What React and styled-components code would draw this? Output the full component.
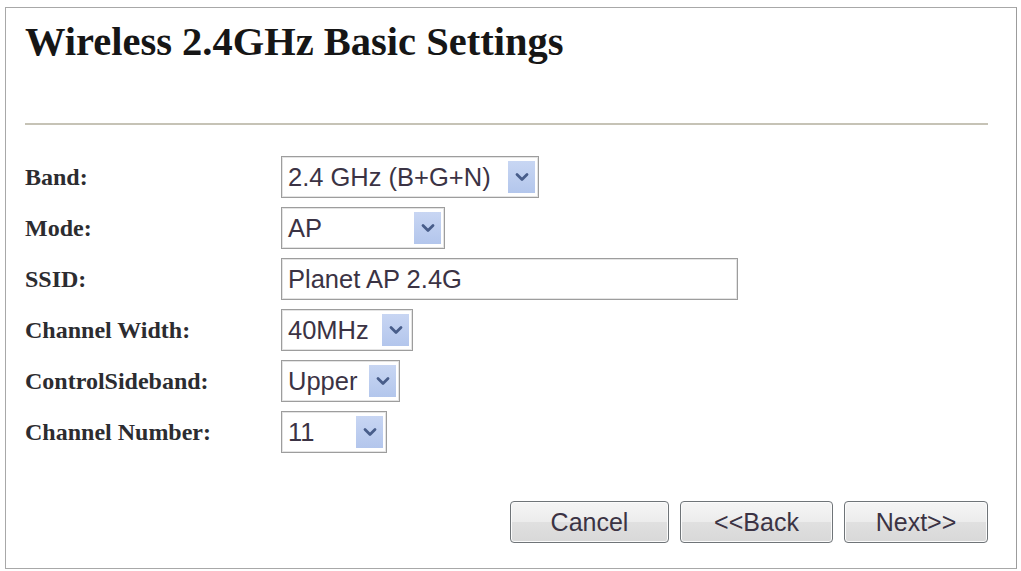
import React from 'react';
import styled, { createGlobalStyle } from 'styled-components';

const GlobalStyle = createGlobalStyle`
  html, body {
    margin: 0;
    padding: 0;
    background: #ffffff;
  }
`;

const fields = [
  { label: 'Band:', value: '2.4 GHz (B+G+N)', width: 258, kind: 'select' },
  { label: 'Mode:', value: 'AP', width: 164, kind: 'select' },
  { label: 'SSID:', value: 'Planet AP 2.4G', width: 457, kind: 'input' },
  { label: 'Channel Width:', value: '40MHz', width: 132, kind: 'select' },
  { label: 'ControlSideband:', value: 'Upper', width: 119, kind: 'select' },
  { label: 'Channel Number:', value: '11', width: 106, kind: 'select' },
];

const buttons = [
  { text: 'Cancel', width: 159 },
  { text: '<<Back', width: 153 },
  { text: 'Next>>', width: 144 },
];

function Chevron() {
  return (
    <svg width="14" height="10" viewBox="0 0 14 10">
      <path d="M2 2.5 L7 7.5 L12 2.5" fill="none" stroke="#485d8a" strokeWidth="2.8" strokeLinecap="round" strokeLinejoin="round" />
    </svg>
  );
}

function Field({ field }) {
  return (
    <Box $width={field.width}>
      <BoxText>{field.value}</BoxText>
      {field.kind === 'select' && (
        <ArrowButton>
          <Chevron />
        </ArrowButton>
      )}
    </Box>
  );
}

export default function App() {
  return (
    <>
      <GlobalStyle />
      <Frame>
        <Title>Wireless 2.4GHz Basic Settings</Title>
        <Divider />
        <Form>
          {fields.map((f) => (
            <Row key={f.label}>
              <Label>{f.label}</Label>
              <Field field={f} />
            </Row>
          ))}
        </Form>
        <ButtonBar>
          {buttons.map((b) => (
            <Button key={b.text} $width={b.width}>{b.text}</Button>
          ))}
        </ButtonBar>
      </Frame>
    </>
  );
}

// Styled Components
const Frame = styled.div`
  margin: 7px 4px 0 5px;
  height: 562px;
  box-sizing: border-box;
  border: 1px solid #a8a8a8;
  border-right-color: #9c9c9c;
  padding: 0 28px 0 19px;
  display: flex;
  flex-direction: column;
`;

const Title = styled.h1`
  margin: 13px 0 0 0;
  font-family: "Liberation Serif", "Times New Roman", serif;
  font-weight: bold;
  font-size: 40.5px;
  line-height: 42px;
  color: #161616;
`;

const Divider = styled.div`
  margin-top: 60px;
  height: 0;
  border-top: 2px solid #c6c3b6;
`;

const Form = styled.div`
  margin-top: 31px;
  display: flex;
  flex-direction: column;
  gap: 9px;
`;

const Row = styled.div`
  display: grid;
  grid-template-columns: 256px auto;
  align-items: center;
  height: 42px;
`;

const Label = styled.div`
  font-family: "Liberation Serif", "Times New Roman", serif;
  font-weight: bold;
  font-size: 24px;
  color: #2c2c30;
`;

const Box = styled.div`
  width: ${(p) => p.$width}px;
  height: 42px;
  box-sizing: border-box;
  border: 1px solid #9d9d9d;
  box-shadow: inset 0 0 0 1px #e4e4e4;
  background: #ffffff;
  display: flex;
  align-items: center;
  padding: 0 3px 0 6px;
`;

const BoxText = styled.span`
  flex: 1;
  font-family: "Liberation Sans", Arial, sans-serif;
  font-size: 25.5px;
  color: #3b3344;
  white-space: nowrap;
`;

const ArrowButton = styled.span`
  width: 27px;
  height: 32px;
  display: flex;
  align-items: center;
  justify-content: center;
  background: linear-gradient(#c8d6f3, #b3c6ec);
`;

const ButtonBar = styled.div`
  margin-top: 48px;
  display: flex;
  justify-content: flex-end;
  gap: 11px;
`;

const Button = styled.button`
  width: ${(p) => p.$width}px;
  height: 42px;
  border: 1px solid #6f7478;
  border-radius: 4px;
  box-shadow: inset 0 0 0 1px #fbfbfb;
  background: linear-gradient(#f5f5f5, #ececec 50%, #e0e0e0 51%, #d8d8d8);
  font-family: "Liberation Sans", Arial, sans-serif;
  font-size: 25px;
  color: #3b3344;
  padding: 0;
  cursor: pointer;
`;
